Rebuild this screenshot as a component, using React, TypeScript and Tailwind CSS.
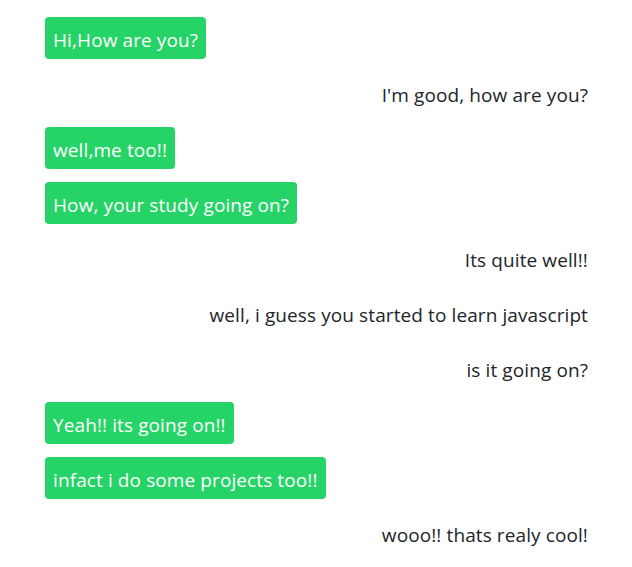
import React from "react";

const msgs: { t: string; me: boolean }[] = [
  { t: "Hi,How are you?", me: true },
  { t: "I'm good, how are you?", me: false },
  { t: "well,me too!!", me: true },
  { t: "How, your study going on?", me: true },
  { t: "Its quite well!!", me: false },
  { t: "well, i guess you started to learn javascript", me: false },
  { t: "is it going on?", me: false },
  { t: "Yeah!! its going on!!", me: true },
  { t: "infact i do some projects too!!", me: true },
  { t: "wooo!! thats realy cool!", me: false },
];

export default function App() {
  return (
    <div
      className="w-[632px] h-[567px] bg-white pt-[17px] pl-[45px] pr-[44px] flex flex-col gap-[13px] overflow-hidden"
      style={{ fontFamily: '"Open Sans", "Noto Sans", sans-serif' }}
    >
      {msgs.map((m, i) =>
        m.me ? (
          <div key={i} className="flex justify-start">
            <div className="h-[42px] px-2 pt-[4px] flex items-center rounded-[4px] bg-[#25d366] text-white text-[19px] leading-none tracking-[0.1px]">
              {m.t}
            </div>
          </div>
        ) : (
          <div key={i} className="flex justify-end">
            <div className="h-[42px] pt-[4px] flex items-center text-[#212529] text-[19px] leading-none tracking-[0.1px]">
              {m.t}
            </div>
          </div>
        )
      )}
    </div>
  );
}
